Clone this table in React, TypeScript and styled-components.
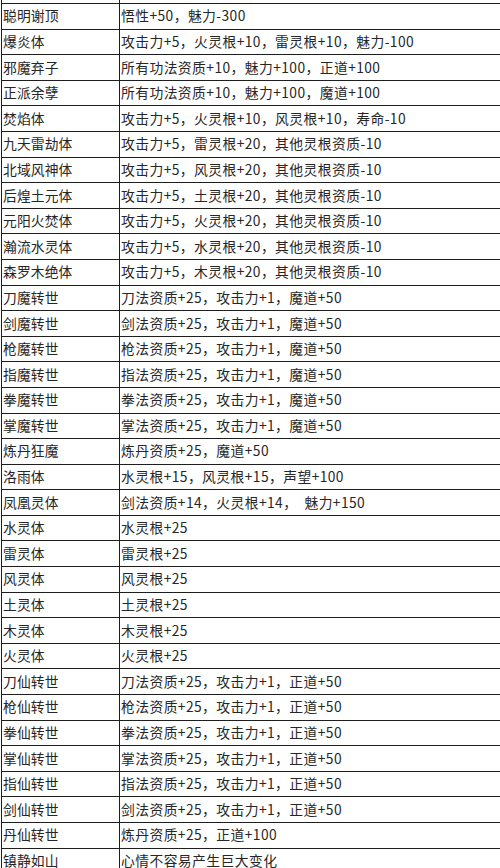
import React from "react";
import styled, { createGlobalStyle } from "styled-components";

const GlobalStyle = createGlobalStyle`
  html, body {
    margin: 0;
    padding: 0;
    background: #ffffff;
  }
  body {
    font-family: "Noto Sans CJK SC", "Noto Sans", sans-serif;
    overflow: hidden;
  }
`;

const Table = styled.div`
  width: 500px;
  height: 868px;
  overflow: hidden;
  padding-left: 1px;
  box-sizing: border-box;
`;

const Row = styled.div<{ $stub?: boolean }>`
  display: grid;
  grid-template-columns: 119px 1fr;
  height: ${(p) => (p.$stub ? "4px" : "25.6px")};
  box-sizing: border-box;
  border-bottom: 1px solid #1e1e1e;
`;

const NameCell = styled.div`
  display: flex;
  align-items: center;
  box-sizing: border-box;
  border-left: 1px solid #1e1e1e;
  border-right: 1px solid #1e1e1e;
  padding-left: 1px;
  font-size: 13.8px;
  line-height: 1;
  letter-spacing: 0.1px;
  color: #262626;
  white-space: nowrap;
  overflow: hidden;
`;

const EffectCell = styled.div`
  display: flex;
  align-items: center;
  padding-left: 1px;
  font-size: 13.8px;
  line-height: 1;
  letter-spacing: 0.42px;
  color: #262626;
  white-space: pre;
  overflow: hidden;
`;

const rows: [string, string][] = [
  ["聪明谢顶", "悟性+50，魅力-300"],
  ["爆炎体", "攻击力+5，火灵根+10，雷灵根+10，魅力-100"],
  ["邪魔弃子", "所有功法资质+10，魅力+100，正道+100"],
  ["正派余孽", "所有功法资质+10，魅力+100，魔道+100"],
  ["焚焰体", "攻击力+5，火灵根+10，风灵根+10，寿命-10"],
  ["九天雷劫体", "攻击力+5，雷灵根+20，其他灵根资质-10"],
  ["北域风神体", "攻击力+5，风灵根+20，其他灵根资质-10"],
  ["后煌土元体", "攻击力+5，土灵根+20，其他灵根资质-10"],
  ["元阳火焚体", "攻击力+5，火灵根+20，其他灵根资质-10"],
  ["瀚流水灵体", "攻击力+5，水灵根+20，其他灵根资质-10"],
  ["森罗木绝体", "攻击力+5，木灵根+20，其他灵根资质-10"],
  ["刀魔转世", "刀法资质+25，攻击力+1，魔道+50"],
  ["剑魔转世", "剑法资质+25，攻击力+1，魔道+50"],
  ["枪魔转世", "枪法资质+25，攻击力+1，魔道+50"],
  ["指魔转世", "指法资质+25，攻击力+1，魔道+50"],
  ["拳魔转世", "拳法资质+25，攻击力+1，魔道+50"],
  ["掌魔转世", "掌法资质+25，攻击力+1，魔道+50"],
  ["炼丹狂魔", "炼丹资质+25，魔道+50"],
  ["洛雨体", "水灵根+15，风灵根+15，声望+100"],
  ["凤凰灵体", "剑法资质+14，火灵根+14，  魅力+150"],
  ["水灵体", "水灵根+25"],
  ["雷灵体", "雷灵根+25"],
  ["风灵体", "风灵根+25"],
  ["土灵体", "土灵根+25"],
  ["木灵体", "木灵根+25"],
  ["火灵体", "火灵根+25"],
  ["刀仙转世", "刀法资质+25，攻击力+1，正道+50"],
  ["枪仙转世", "枪法资质+25，攻击力+1，正道+50"],
  ["拳仙转世", "拳法资质+25，攻击力+1，正道+50"],
  ["掌仙转世", "掌法资质+25，攻击力+1，正道+50"],
  ["指仙转世", "指法资质+25，攻击力+1，正道+50"],
  ["剑仙转世", "剑法资质+25，攻击力+1，正道+50"],
  ["丹仙转世", "炼丹资质+25，正道+100"],
  ["镇静如山", "心情不容易产生巨大变化"],
];

export default function App() {
  return (
    <>
      <GlobalStyle />
      <Table>
        <Row $stub>
          <NameCell />
          <EffectCell />
        </Row>
        {rows.map(([name, effect]) => (
          <Row key={name}>
            <NameCell>{name}</NameCell>
            <EffectCell>{effect}</EffectCell>
          </Row>
        ))}
      </Table>
    </>
  );
}
